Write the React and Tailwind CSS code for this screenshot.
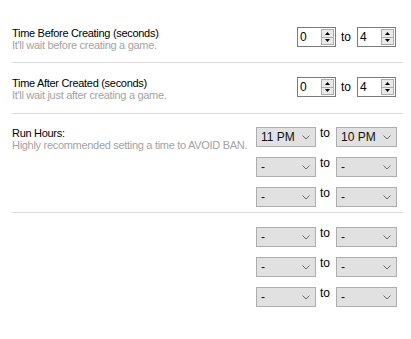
import React from "react";

const font = { fontFamily: '"Liberation Sans", Arial, sans-serif' };

function Spin({ value }) {
  return (
    <div className="flex h-[20px] w-[39px] border border-[#7a7a7a] bg-white">
      <div className="flex-1 pl-[2px] text-[12px] leading-[18px] text-black">{value}</div>
      <div className="my-[1px] mr-[1px] flex w-[13px] flex-col">
        <div className="flex flex-1 items-center justify-center border border-[#acacac] bg-[#e9e9e9]">
          <svg width="5" height="3" viewBox="0 0 5 3"><polygon points="2.5,0 5,3 0,3" fill="#000" /></svg>
        </div>
        <div className="flex flex-1 items-center justify-center border border-t-0 border-[#acacac] bg-[#e9e9e9]">
          <svg width="5" height="3" viewBox="0 0 5 3"><polygon points="0,0 5,0 2.5,3" fill="#000" /></svg>
        </div>
      </div>
    </div>
  );
}

function Drop({ value, w }) {
  return (
    <div className={`flex h-[20px] ${w} items-center border border-[#adadad] bg-[#e1e1e1] pl-[4px] pr-[5px]`}>
      <div className="flex-1 text-[12px] leading-[18px] text-[#111]">{value}</div>
      <svg width="8" height="5" viewBox="0 0 8 5">
        <polyline points="0.5,0.5 4,4 7.5,0.5" fill="none" stroke="#6b6b6b" strokeWidth="1" />
      </svg>
    </div>
  );
}

function DropRow({ a = "-", b = "-" }) {
  return (
    <div className="flex items-start">
      <Drop value={a} w="w-[60px]" />
      <div className="w-[20px] pl-[4px] text-[12px] leading-[13px] text-black">to</div>
      <Drop value={b} w="w-[61px]" />
    </div>
  );
}

function SpinRow({ a, b }) {
  return (
    <div className="mr-[1px] flex items-center">
      <Spin value={a} />
      <div className="w-[21px] pl-[5px] text-[12px] leading-[14px] text-black">to</div>
      <Spin value={b} />
    </div>
  );
}

function Label({ title, sub }) {
  return (
    <div className="text-[11px] leading-[12px] tracking-[-0.3px]">
      <div className="text-black">{title}</div>
      <div className="text-[#a3a3a3]">{sub}</div>
    </div>
  );
}

export default function App() {
  return (
    <div className="h-[339px] w-[411px] bg-white" style={font}>
      <div className="ml-[12px] mr-[8px] border-b border-[#dcdcdc] pb-[11px] pt-[27px]">
        <div className="flex items-start justify-between pr-[6px]">
          <Label title="Time Before Creating (seconds)" sub="It'll wait before creating a game." />
          <SpinRow a="0" b="4" />
        </div>
      </div>
      <div className="ml-[12px] mr-[8px] border-b border-[#dcdcdc] pb-[12px] pt-[14px]">
        <div className="flex items-start justify-between pr-[6px]">
          <Label title="Time After Created (seconds)" sub="It'll wait just after creating a game." />
          <SpinRow a="0" b="4" />
        </div>
      </div>
      <div className="ml-[12px] mr-[8px] border-b border-[#dcdcdc] pb-[5px] pt-[13px]">
        <div className="flex items-start justify-between pr-[6px]">
          <Label title="Run Hours:" sub="Highly recommended setting a time to AVOID BAN." />
          <div className="flex flex-col gap-[10px]">
            <DropRow a="11 PM" b="10 PM" />
            <DropRow />
            <DropRow />
          </div>
        </div>
      </div>
      <div className="ml-[12px] mr-[8px] pt-[14px]">
        <div className="flex justify-end pr-[6px]">
          <div className="flex flex-col gap-[10px]">
            <DropRow />
            <DropRow />
            <DropRow />
          </div>
        </div>
      </div>
    </div>
  );
}
